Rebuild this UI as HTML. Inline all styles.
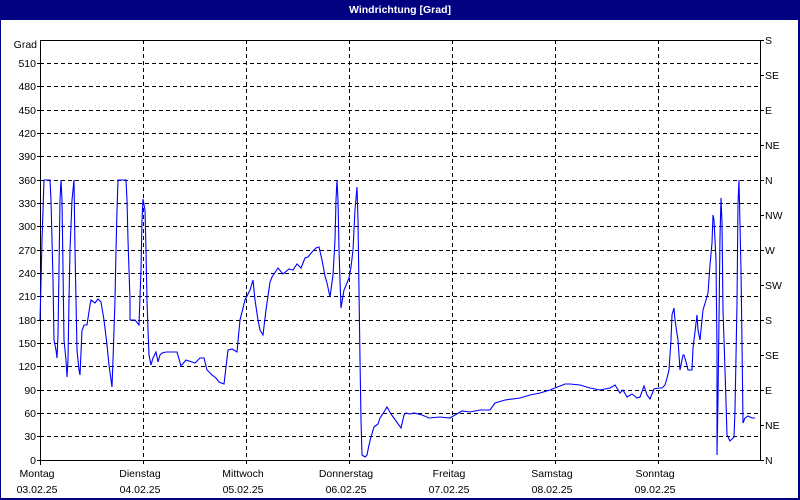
<!DOCTYPE html>
<html><head><style>
html,body{margin:0;padding:0;width:800px;height:500px;overflow:hidden;background:#fff}
svg{display:block}
text{font-family:"Liberation Sans","DejaVu Sans",sans-serif;font-size:10.5px;fill:#000}
</style></head><body>
<svg width="800" height="500" viewBox="0 0 800 500" xmlns="http://www.w3.org/2000/svg">
<rect x="0" y="0" width="800" height="500" fill="#000080"/>
<rect x="1" y="20" width="797" height="478" fill="#fff"/>
<text x="400" y="13" text-anchor="middle" style="fill:#fff;font-weight:bold;font-size:10.5px">Windrichtung [Grad]</text>
<g stroke="#000" stroke-width="1" stroke-dasharray="4,3" shape-rendering="crispEdges">
<line x1="40" y1="63.5" x2="760" y2="63.5"/><line x1="40" y1="86.5" x2="760" y2="86.5"/><line x1="40" y1="110.5" x2="760" y2="110.5"/><line x1="40" y1="133.5" x2="760" y2="133.5"/><line x1="40" y1="156.5" x2="760" y2="156.5"/><line x1="40" y1="180.5" x2="760" y2="180.5"/><line x1="40" y1="203.5" x2="760" y2="203.5"/><line x1="40" y1="226.5" x2="760" y2="226.5"/><line x1="40" y1="250.5" x2="760" y2="250.5"/><line x1="40" y1="273.5" x2="760" y2="273.5"/><line x1="40" y1="296.5" x2="760" y2="296.5"/><line x1="40" y1="320.5" x2="760" y2="320.5"/><line x1="40" y1="343.5" x2="760" y2="343.5"/><line x1="40" y1="366.5" x2="760" y2="366.5"/><line x1="40" y1="390.5" x2="760" y2="390.5"/><line x1="40" y1="413.5" x2="760" y2="413.5"/><line x1="40" y1="436.5" x2="760" y2="436.5"/>
<line x1="143.5" y1="40" x2="143.5" y2="466"/><line x1="246.5" y1="40" x2="246.5" y2="466"/><line x1="349.5" y1="40" x2="349.5" y2="466"/><line x1="452.5" y1="40" x2="452.5" y2="466"/><line x1="555.5" y1="40" x2="555.5" y2="466"/><line x1="658.5" y1="40" x2="658.5" y2="466"/>
</g>
<g stroke="#000" stroke-width="1" shape-rendering="crispEdges" fill="none">
<path d="M40.5 40.5H760.5V460.5H40.5Z"/>
<path d="M37 63.5h3M37 86.5h3M37 110.5h3M37 133.5h3M37 156.5h3M37 180.5h3M37 203.5h3M37 226.5h3M37 250.5h3M37 273.5h3M37 296.5h3M37 320.5h3M37 343.5h3M37 366.5h3M37 390.5h3M37 413.5h3M37 436.5h3M37 460.5h3"/>
<path d="M760 40.5h4M760 75.5h4M760 110.5h4M760 145.5h4M760 180.5h4M760 215.5h4M760 250.5h4M760 285.5h4M760 320.5h4M760 355.5h4M760 390.5h4M760 425.5h4M760 460.5h4"/>
<path d="M40.5 460v5"/>
</g>
<g text-anchor="end">
<text x="37" y="48">Grad</text>
<text x="36" y="67">510</text><text x="36" y="90">480</text><text x="36" y="114">450</text><text x="36" y="137">420</text><text x="36" y="160">390</text><text x="36" y="184">360</text><text x="36" y="207">330</text><text x="36" y="230">300</text><text x="36" y="254">270</text><text x="36" y="277">240</text><text x="36" y="300">210</text><text x="36" y="324">180</text><text x="36" y="347">150</text><text x="36" y="370">120</text><text x="36" y="394">90</text><text x="36" y="417">60</text><text x="36" y="440">30</text><text x="36" y="464">0</text>
</g>
<g>
<text x="765" y="44">S</text><text x="765" y="79">SE</text><text x="765" y="114">E</text><text x="765" y="149">NE</text><text x="765" y="184">N</text><text x="765" y="219">NW</text><text x="765" y="254">W</text><text x="765" y="289">SW</text><text x="765" y="324">S</text><text x="765" y="359">SE</text><text x="765" y="394">E</text><text x="765" y="429">NE</text><text x="765" y="464">N</text>
</g>
<g text-anchor="middle">
<text x="37" y="477">Montag</text><text x="37" y="493">03.02.25</text>
<text x="140" y="477">Dienstag</text><text x="140" y="493">04.02.25</text>
<text x="243" y="477">Mittwoch</text><text x="243" y="493">05.02.25</text>
<text x="346" y="477">Donnerstag</text><text x="346" y="493">06.02.25</text>
<text x="449" y="477">Freitag</text><text x="449" y="493">07.02.25</text>
<text x="552" y="477">Samstag</text><text x="552" y="493">08.02.25</text>
<text x="655" y="477">Sonntag</text><text x="655" y="493">09.02.25</text>
</g>
<polyline fill="none" stroke="#0000ff" stroke-width="1.1" points="40,320 41,283 42,240 43,210 44,180 50,180 51,200 52,240 53,280 54,340 56,350 57,358 58,335 59,270 60,200 61,180 62,200 63,270 64,340 66,360 67,377 68,360 69,300 70,250 72,200 74,180 75,250 76,300 77,350 79,370 80,375 82,330 83,328 84,325 87,325 90,305 91,300 95,303 98,299 101,302 104,320 107,345 109,365 112,387 113,360 115,300 116,250 117,210 118,180 126,180 127,200 128,240 129,270 130,300 130,320 135,320 139,325 141,270 142,220 143,199 145,210 146,250 147,300 148,330 149,355 151,365 153,358 156,352 158,362 160,355 162,353 166,352 170,352 177,352 181,366 186,360 192,362 195,363 200,358 204,358 207,370 212,375 216,378 219,382 224,384 228,350 232,349 237,352 240,320 245,300 250,290 253,280 255,300 258,320 260,330 263,335 266,310 270,282 272,277 278,268 283,274 289,269 293,270 297,264 301,268 305,258 308,257 312,252 316,248 319,247 322,260 325,276 327,283 330,297 333,275 335,240 336,200 337,180 338,200 339,250 340,280 341,308 344,290 347,283 349,278 351,267 353,250 355,210 357,187 358,220 359,290 360,360 361,420 362,455 365,457 367,455 369,445 371,437 374,427 378,424 380,418 384,412 387,407 391,414 396,421 401,428 404,415 406,413 410,414 414,413 418,414 422,415 429,418 440,417 450,418 455,415 462,411 470,412 480,410 490,410 495,403 505,400 520,398 530,395 540,393 550,390 560,386 565,384 570,384 580,385 590,388 600,390 610,388 615,385 620,393 623,390 627,397 632,394 637,398 640,397 644,386 647,395 650,399 654,389 659,388 662,388 665,385 667,378 669,370 670,355 671,340 672,315 674,308 675,320 678,340 680,370 683,355 684,355 686,362 688,370 692,370 693,348 694,340 697,315 698,330 700,340 701,330 703,310 706,300 708,293 710,265 712,243 713,215 714,220 716,260 717,350 717,423 717,455 718,400 719,320 720,237 721,198 722,223 723,310 725,370 727,435 730,441 734,437 735,410 737,303 738,203 739,180 741,270 742,343 743,423 745,418 748,416 752,418 755,418"/>
</svg>
</body></html>
